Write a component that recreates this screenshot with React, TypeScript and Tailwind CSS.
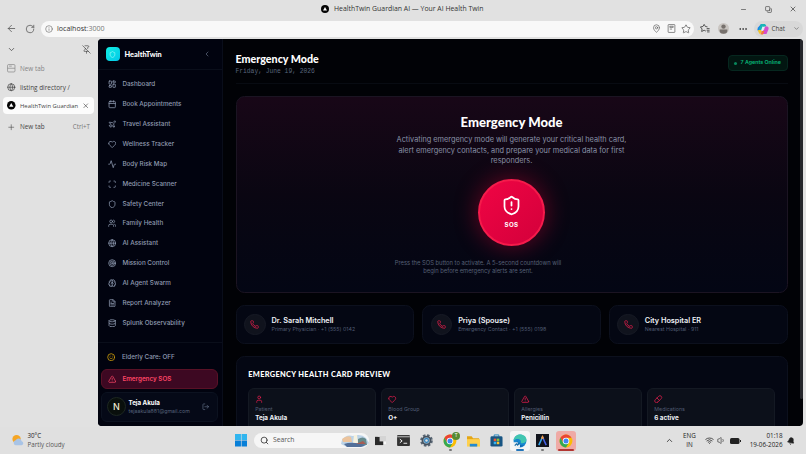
import type { ReactNode } from 'react';
import {
  Activity,
  ArrowLeft,
  Bell,
  Brain,
  Calendar,
  ChevronDown,
  ChevronLeft,
  ChevronUp,
  Copy,
  Database,
  Ellipsis,
  FileText,
  Globe,
  Heart,
  Info,
  LayoutDashboard,
  LogOut,
  MapPin,
  Minus,
  Phone,
  Pill,
  PinOff,
  Plane,
  Plus,
  RotateCw,
  Scan,
  Search,
  Shield,
  ShieldAlert,
  Smile,
  Star,
  Target,
  TriangleAlert,
  User,
  Users,
  Volume1,
  Wifi,
  X,
  type LucideIcon,
} from 'lucide-react';

const navItems: { label: string; icon: LucideIcon }[] = [
  { label: 'Dashboard', icon: LayoutDashboard },
  { label: 'Book Appointments', icon: Calendar },
  { label: 'Travel Assistant', icon: Plane },
  { label: 'Wellness Tracker', icon: Heart },
  { label: 'Body Risk Map', icon: Activity },
  { label: 'Medicine Scanner', icon: Scan },
  { label: 'Safety Center', icon: Shield },
  { label: 'Family Health', icon: Users },
  { label: 'AI Assistant', icon: Globe },
  { label: 'Mission Control', icon: Target },
  { label: 'AI Agent Swarm', icon: Brain },
  { label: 'Report Analyzer', icon: FileText },
  { label: 'Splunk Observability', icon: Database },
];

const contacts = [
  { name: 'Dr. Sarah Mitchell', detail: 'Primary Physician · +1 (555) 0142' },
  { name: 'Priya (Spouse)', detail: 'Emergency Contact · +1 (555) 0198' },
  { name: 'City Hospital ER', detail: 'Nearest Hospital · 911' },
];

const healthCard: { label: string; value: string; icon: LucideIcon }[] = [
  { label: 'Patient', value: 'Teja Akula', icon: User },
  { label: 'Blood Group', value: 'O+', icon: Heart },
  { label: 'Allergies', value: 'Penicillin', icon: TriangleAlert },
  { label: 'Medications', value: '6 active', icon: Pill },
];

const AppMark = ({ className }: { className: string }) => (
  <svg viewBox="0 0 16 16" className={className}>
    <circle cx="8" cy="8" r="8" fill="#050505" />
    <path d="M8 3.8 12 11H4z" fill="#fff" />
  </svg>
);

const Chrome = () => (
  <svg viewBox="0 0 24 24" className="size-[14px]">
    <circle cx="12" cy="12" r="11" fill="#fbbc05" />
    <path d="M2.5 6.5A11 11 0 0 1 21.5 6.5H12L7.2 14.8z" fill="#ea4335" />
    <path d="M2.5 6.5A11 11 0 0 0 12 23l4.8-8.2H7.2z" fill="#34a853" />
    <circle cx="12" cy="12" r="5.6" fill="#fff" />
    <circle cx="12" cy="12" r="4.3" fill="#4285f4" />
  </svg>
);

const TitleBar = () => (
  <div className="flex h-[18px] items-center">
    <div className="w-[321px]" />
    <AppMark className="size-[8px]" />
    <span className="ml-[5px] text-[6.9px] whitespace-nowrap text-[#333]">
      HealthTwin Guardian AI — Your AI Health Twin
    </span>
    <div className="mr-[9px] ml-auto flex items-center gap-[17.5px] text-[#333]">
      <Minus className="size-[7px]" />
      <Copy className="size-[7px] -scale-x-100 rotate-90" />
      <X className="size-[8px]" />
    </div>
  </div>
);

const Toolbar = () => (
  <div className="flex h-[21px] items-center text-[#555]">
    <ArrowLeft className="ml-[6px] size-[11px]" strokeWidth={1.7} />
    <RotateCw className="ml-[8px] size-[10px]" strokeWidth={1.8} />
    <div className="ml-[6px] flex h-[16px] w-[653px] items-center rounded-full bg-[#f8f8f8] pr-[3px] pl-[4px]">
      <Info className="size-[8px]" strokeWidth={1.6} />
      <span className="ml-[4px] text-[7.05px] text-[#333]">
        localhost<span className="text-[#777]">:3000</span>
      </span>
      <div className="ml-auto flex items-center gap-[5.5px]">
        <MapPin className="size-[9px]" strokeWidth={1.7} />
        <svg viewBox="0 0 16 16" className="size-[9px]" fill="none" stroke="currentColor" strokeWidth="1.2">
          <rect x="2" y="1" width="12" height="14" rx="1" />
          <path d="M5 4h6v2H5zM5 9h4" />
        </svg>
        <Star className="size-[10px]" strokeWidth={1.7} />
      </div>
    </div>
    <svg viewBox="0 0 24 24" className="ml-[6px] size-[10px]" fill="none" stroke="#333" strokeWidth="1.9" strokeLinejoin="round">
      <path d="m14 17-4-2-6 3 1-6-4-5 6-1 3-5 3 5 5 1M16 11h7M16 15h7M17 19h6" />
    </svg>
    <svg viewBox="0 0 20 20" className="ml-[8px] size-[11px]">
      <circle cx="10" cy="10" r="10" fill="#c9c5c1" />
      <circle cx="10" cy="6.5" r="4" fill="#77716d" />
      <path d="M3 12h14v2a7 5.5 0 0 1-14 0z" fill="#77716d" />
    </svg>
    <Ellipsis className="ml-[8.5px] size-[10px] text-[#333]" />
    <div className="ml-[6px] flex h-[16px] w-[49px] items-center rounded-full bg-[#d8d8d8] pr-[3px] pl-[3px]">
      <svg viewBox="0 0 24 24" className="size-[12px]">
        <path d="M8 2h8l-5 14H4Q-1 16 2 9z" fill="#1684e8" />
        <path d="M8 2h7q3 0 4 5h-5L9 17H3l3-10z" fill="#19b5b7" />
        <path d="M2 14h8l3-7-6 15Q4 22 3 18z" fill="#f4c52c" />
        <path d="M16 7h5q4 2 1 8l-3 7H8l3-8h3z" fill="#d44dce" />
        <path d="M10 16h5l-3 7H7z" fill="#f47839" />
        <path d="m11 7 4 1-3 8-4-1z" fill="#e9eef4" />
      </svg>
      <span className="ml-[3px] text-[6.3px] text-[#444]">Chat</span>
      <ChevronDown className="ml-auto size-[7px]" />
    </div>
  </div>
);

const TabPane = () => (
  <div className="flex w-[97.5px] shrink-0 flex-col text-[6.35px] text-[#444]">
    <div className="flex h-[20px] items-center justify-between pr-[7px] pl-[7px]">
      <ChevronDown className="size-[9px]" />
      <PinOff className="size-[9px]" strokeWidth={1.7} />
    </div>
    <div className="flex h-[19px] items-center gap-[4.5px] pl-[7px] text-[#858585]">
      <svg viewBox="0 0 16 16" className="size-[8.5px]" fill="none" stroke="currentColor" strokeWidth="1.3">
        <rect x="1" y="1" width="14" height="14" rx="2" />
        <path d="M1 8h14M4 4h5" />
      </svg>
      New tab
    </div>
    <div className="flex h-[19px] items-center gap-[4.5px] pl-[7px]">
      <Globe className="size-[8.5px]" />
      <span className="text-[6.4px]">listing directory /</span>
    </div>
    <div className="ml-[3px] flex h-[17px] w-[91px] items-center rounded-[4px] bg-[#fcfcfc] pl-[4px]">
      <AppMark className="size-[8.5px] shrink-0" />
      <span className="ml-[4.5px] w-[61px] pt-[1px] text-[5.9px] whitespace-nowrap">
        HealthTwin Guardian
      </span>
      <X className="ml-[1px] size-[7.5px] shrink-0" />
    </div>
    <div className="mt-[4px] flex h-[18px] items-center pr-[7.5px] pl-[7px]">
      <Plus className="mr-[4.5px] size-[8.5px]" strokeWidth={1.6} />
      New tab
      <span className="ml-auto text-[6.2px] text-[#777]">Ctrl+T</span>
    </div>
  </div>
);

const SideBar = () => (
  <aside className="flex w-[125.5px] shrink-0 flex-col border-r border-[#090d1a] bg-[#01030f]">
    <div className="flex h-[31px] shrink-0 items-center border-b border-[#0a0e1a] pr-[11px] pl-[8px]">
      <div className="flex size-[14.5px] items-center justify-center rounded-[4px] bg-linear-to-br from-[#12eee2] to-[#05c8e9]">
        <Shield className="size-[7px] text-[#b8ffff]" />
      </div>
      <span className="ml-[4.5px] pt-[1px] font-['Lato'] text-[7.4px] font-black text-white">
        HealthTwin
      </span>
      <ChevronLeft className="ml-auto size-[8px] text-[#667187]" />
    </div>
    <nav className="flex flex-col pt-[4.6px] pl-[10px]">
      {navItems.map(({ label, icon: Icon }) => (
        <div key={label} className="flex h-[19.88px] items-center gap-[6.5px] text-[#8f9ab0]">
          <Icon className="size-[8.4px]" strokeWidth={2.2} />
          <span className="pt-[1px] text-[6.3px] font-medium whitespace-nowrap">{label}</span>
        </div>
      ))}
    </nav>
    <div className="mt-auto flex h-[84px] shrink-0 flex-col border-t border-[#0a0e1a] pr-[4.5px] pl-[3.5px]">
      <div className="mt-[4px] flex h-[20px] items-center gap-[6.5px] pl-[6px]">
        <Smile className="size-[8.4px] text-[#d6a30b]" strokeWidth={2.2} />
        <span className="pt-[1px] text-[6.35px] font-medium text-[#8f9ab0]">
          Elderly Care: OFF
        </span>
      </div>
      <div className="mt-[2px] flex h-[20px] items-center gap-[6.5px] rounded-[6px] border border-[#591126] bg-[#3d0822] pl-[5.5px] text-[#fb4565]">
        <TriangleAlert className="size-[8.4px]" />
        <span className="pt-[1px] text-[6.3px] font-semibold">Emergency SOS</span>
      </div>
      <div className="mt-[2.5px] flex h-[30.5px] items-center rounded-[6px] border border-[#0c1220] bg-[#050917] pr-[7px] pl-[5px]">
        <div className="flex size-[19px] items-center justify-center rounded-full border border-[#1d2721] bg-[#090f0c] text-[9px] font-medium text-[#eee9cf]">
          N
        </div>
        <div className="ml-[2.5px] flex flex-col">
          <span className="text-[6.2px] leading-[8px] font-bold text-white">Teja Akula</span>
          <span className="text-[5.25px] leading-[8px] text-[#566279]">tejaakula881@gmail.com</span>
        </div>
        <LogOut className="ml-auto size-[7.5px] text-[#68758c]" />
      </div>
    </div>
  </aside>
);

const Hero = () => (
  <section className="flex h-[197px] shrink-0 flex-col items-center rounded-[8.4px] border border-[#1b1422] bg-linear-to-b from-[#180717] via-[#0a0612] to-[#030614]">
    <h2 className="mt-[16.5px] font-['Lato'] text-[13.1px] leading-[17px] font-black text-white">
      Emergency Mode
    </h2>
    <p className="mt-[4.8px] flex flex-col text-center text-[7.35px] leading-[10.6px] whitespace-nowrap text-[#8a93a8]">
      <span>Activating emergency mode will generate your critical health card,</span>
      <span>alert emergency contacts, and prepare your medical data for first</span>
      <span>responders.</span>
    </p>
    <button className="mt-[11.5px] flex size-[67px] shrink-0 flex-col items-center justify-center rounded-full border-2 border-[#f51b4b] bg-linear-to-br from-[#f00544] to-[#d3003b] text-white shadow-[0_0_24px_rgba(225,0,55,0.45)]">
      <ShieldAlert className="size-[21px]" />
      <span className="mt-[3.5px] text-[6.2px] leading-[9px] font-bold tracking-[0.4px]">SOS</span>
    </button>
    <p className="mt-[13px] mr-[67px] flex flex-col text-center text-[5.8px] leading-[8.7px] whitespace-nowrap text-[#556076]">
      <span>Press the SOS button to activate. A 5-second countdown will</span>
      <span>begin before emergency alerts are sent.</span>
    </p>
  </section>
);

const MainPanel = () => (
  <main className="flex min-w-0 flex-1 flex-col overflow-hidden bg-[#010206] pr-[12.5px] pl-[12.5px]">
    <header className="flex h-[45px] shrink-0 items-center justify-between border-b border-[#080b12]">
      <div className="flex flex-col pt-[6.5px]">
        <h1 className="font-['Lato'] text-[10.7px] leading-[14px] font-black text-white">
          Emergency Mode
        </h1>
        <p className="pt-[0.6px] font-['Liberation_Mono'] text-[6.3px] leading-[10px] text-[#59657c]">
          Friday, June 19, 2026
        </p>
      </div>
      <div className="mt-[4px] flex h-[15.5px] w-[60px] items-center justify-center gap-[3.5px] rounded-[4px] border border-[#06271f] bg-[#021611] text-[#08b779]">
        <span className="size-[3px] rounded-full bg-[#08875c]" />
        <span className="pt-[0.5px] text-[5.3px] font-semibold">7 Agents Online</span>
      </div>
    </header>
    <div className="h-[12px] shrink-0" />
    <Hero />
    <section className="mt-[12px] grid shrink-0 grid-cols-3 gap-[8px]">
      {contacts.map(({ name, detail }) => (
        <div
          key={name}
          className="flex h-[38.5px] items-center rounded-[8.4px] border border-[#0c101d] bg-[#040713] pl-[7.5px]"
        >
          <div className="flex size-[21.5px] items-center justify-center rounded-full border border-[#171a25] bg-[#10131d]">
            <Phone className="size-[9px] text-[#d51e49]" strokeWidth={2.2} />
          </div>
          <div className="ml-[6px] flex flex-col">
            <span className="text-[7.3px] leading-[9px] font-semibold text-[#eef1f6]">{name}</span>
            <span className="text-[5.3px] leading-[8px] text-[#505b72]">{detail}</span>
          </div>
        </div>
      ))}
    </section>
    <section className="mt-[12px] h-[120px] shrink-0 rounded-[8.4px] border border-[#0c101d] bg-[#040713] px-[11.7px]">
      <h3 className="mt-[12.5px] font-['Lato'] text-[7.4px] leading-[12px] font-black tracking-[0.34px] text-white">
        EMERGENCY HEALTH CARD PREVIEW
      </h3>
      <div className="mt-[6.5px] grid grid-cols-4 gap-[5.5px]">
        {healthCard.map(({ label, value, icon: Icon }) => (
          <div
            key={label}
            className="flex h-[46px] flex-col rounded-[6px] border border-[#141923] bg-[#0c101a] px-[6px] pt-[6px]"
          >
            <Icon className="size-[8.4px] text-[#df1d4c]" strokeWidth={2.2} />
            <span className="mt-[2px] text-[5.3px] leading-[8px] text-[#505b72]">{label}</span>
            <span className="mt-[1px] text-[6.3px] leading-[9px] font-bold text-[#eef1f6]">
              {value}
            </span>
          </div>
        ))}
      </div>
    </section>
  </main>
);

interface TaskIconProps {
  children: ReactNode;
  className?: string;
  bar?: string;
}

const TaskIcon = ({ children, className = '', bar }: TaskIconProps) => (
  <div className={`relative flex h-[20px] w-[20px] items-center justify-center rounded-[3px] ${className}`}>
    {children}
    {bar && <span className={`absolute bottom-0 h-[1.5px] rounded-full ${bar}`} />}
  </div>
);

const Weather = () => (
  <div className="flex w-[234.5px] shrink-0 items-center gap-[3.5px] pl-[11px]">
    <svg viewBox="0 0 14 14" className="size-[13px]">
      <circle cx="6" cy="5.5" r="4.5" fill="#f5a524" />
      <path d="M5 12a2.7 2.7 0 0 1 0-5.3 3.5 3.5 0 0 1 6.5 1 2.2 2.2 0 0 1 0 4.3z" fill="#a9c4e6" />
    </svg>
    <div className="flex flex-col text-[6.2px] leading-[8.4px] whitespace-nowrap">
      <span className="text-[#222]">30°C</span>
      <span className="text-[#555]">Partly cloudy</span>
    </div>
  </div>
);

const TaskBar = () => (
  <footer className="flex h-[27px] items-center bg-[#e0e0e0]">
    <Weather />
    <svg viewBox="0 0 12 12" className="size-[12.5px] shrink-0">
      <path d="M0 0h5.7v5.7H0zM6.3 0H12v5.7H6.3z" fill="#30b5ef" />
      <path d="M0 6.3h5.7V12H0zM6.3 6.3H12V12H6.3z" fill="#087fd8" />
    </svg>
    <div className="ml-[7px] flex h-[15.5px] w-[115px] shrink-0 items-center rounded-full bg-[#f6f6f6] pl-[5.5px]">
      <Search className="size-[9px] text-[#222]" />
      <span className="ml-[4.5px] text-[6.8px] text-[#555]">Search</span>
      <svg viewBox="0 0 28 14" className="ml-auto h-[14px] w-[28px]">
        <path d="M1 6Q5 0 12 2q8-3 13 2l3 5-6 4H6L0 10z" fill="#bcd3e7" />
        <path d="M1 5q5-4 9-2l1 5H2z" fill="#ecc49d" />
        <path d="M13 1h3l1 8h-5z" fill="#f6f2df" />
        <path d="M17 5q5-3 8 0l1 6h-9z" fill="#668b8c" />
        <path d="M3 10q8-3 22 1l-5 2H6z" fill="#526f99" />
        <path d="m15 10 7-3 3 3z" fill="#a55c54" />
      </svg>
    </div>
    <div className="ml-[1.5px] flex gap-[3.2px]">
      <TaskIcon>
        <svg viewBox="0 0 12 12" className="size-[11px]">
          <path d="M3 1h9v9H3z" fill="#f8f8f8" />
          <path d="M0 2h9v9H0z" fill="#292929" />
          <path d="M5 1h7v6H5z" fill="#d4d4d4" />
        </svg>
      </TaskIcon>
      <TaskIcon>
        <svg viewBox="0 0 14 12" className="h-[11px] w-[13px]">
          <rect width="14" height="12" rx="1" fill="#333" />
          <path d="M0 1h14v1.6H0z" fill="#999" />
          <path d="m3 4.5 2.5 2L3 8.5M7 9h4" stroke="#fff" fill="none" />
        </svg>
      </TaskIcon>
      <TaskIcon>
        <svg viewBox="0 0 24 24" className="size-[13px]">
          <circle cx="12" cy="12" r="9.7" fill="none" stroke="#5a6774" strokeWidth="4" strokeDasharray="4.6 3" />
          <circle cx="12" cy="12" r="7.5" fill="#8eaabd" stroke="#45515e" strokeWidth="3" />
          <circle cx="12" cy="12" r="3.5" fill="#e0e0e0" stroke="#247dbd" strokeWidth="2" />
        </svg>
      </TaskIcon>
      <TaskIcon bar="w-[3px] bg-[#777]">
        <Chrome />
        <span className="absolute top-[1px] right-0 flex size-[8px] items-center justify-center rounded-full bg-[#568a32] text-[5px] text-white">
          T
        </span>
      </TaskIcon>
      <TaskIcon>
        <svg viewBox="0 0 14 12" className="h-[12px] w-[13px]">
          <path d="M0 1h5l1.5 2H13v5H0z" fill="#e4a616" />
          <path d="M0 4h14v8H0z" fill="#ffd04d" />
          <path d="M3 9h8v3H3z" fill="#238ad1" />
        </svg>
      </TaskIcon>
      <TaskIcon>
        <svg viewBox="0 0 14 14" className="size-[13px]">
          <path d="M4.5 3V1h5v2" fill="none" stroke="#2085bd" />
          <rect x=".5" y="2.5" width="13" height="11" rx="1.5" fill="#185583" />
          <path d="M4 5h2.7v2.7H4z" fill="#f15a32" />
          <path d="M7.3 5H10v2.7H7.3z" fill="#83c43e" />
          <path d="M4 8.3h2.7V11H4z" fill="#35b4ef" />
          <path d="M7.3 8.3H10V11H7.3z" fill="#ffc22d" />
        </svg>
      </TaskIcon>
      <TaskIcon className="bg-[#f5f5f5]" bar="w-[8px] bg-[#2476bb]">
        <svg viewBox="0 0 24 24" className="size-[14px]">
          <circle cx="12" cy="12" r="11" fill="#1686cf" />
          <path d="M1 11C2 4 7 1 12 1c7 0 11 4 11 9 0 4-3 6-7 6-4 0-2-3-3-5-3-4-9-3-12 0z" fill="#42c6b0" />
          <path d="M8 12c-1 5 4 9 11 7-5 5-14 4-14-3z" fill="#125fa8" />
          <path d="M1 14h7v4h4v5H4l-3-4z" fill="#e8f0f4" />
          <path d="m3 20 3-3 2 2 3-4" stroke="#176ba5" strokeWidth="2" fill="none" />
        </svg>
      </TaskIcon>
      <TaskIcon bar="w-[3px] bg-[#777]">
        <svg viewBox="0 0 14 14" className="size-[13px]">
          <path d="M0 0h14v14H0z" fill="#11131b" />
          <path d="M3 12Q5 8 7 3" stroke="#39a9ef" strokeWidth="1.7" fill="none" />
          <path d="M7 3q2 5 4 9" stroke="#4662e7" strokeWidth="1.7" fill="none" />
          <path d="m6 5 1-2 1 2" stroke="#f19b46" strokeWidth="1.6" fill="none" />
        </svg>
      </TaskIcon>
      <TaskIcon className="bg-[#efaaa5]" bar="w-[16px] bg-[#b33632]">
        <Chrome />
      </TaskIcon>
    </div>
    <div className="mr-[11px] ml-auto flex items-center text-[6.3px] leading-[8.4px] text-[#222]">
      <ChevronUp className="size-[9px]" />
      <div className="ml-[8.5px] flex w-[14px] flex-col items-center">
        <span>ENG</span>
        <span>IN</span>
      </div>
      <Wifi className="ml-[8px] size-[9px]" />
      <Volume1 className="ml-[3px] size-[9px]" strokeWidth={1.6} />
      <svg viewBox="0 0 22 12" className="ml-[4px] h-[6px] w-[11px]">
        <rect width="19" height="12" rx="3" fill="#222" />
        <path d="M20 4h2v4h-2z" fill="#222" />
      </svg>
      <div className="ml-[9px] flex w-[33px] flex-col items-end text-[6.3px]">
        <span>01:18</span>
        <span className="whitespace-nowrap">19-06-2026</span>
      </div>
      <Bell className="ml-[4.5px] size-[8px] rotate-12 fill-[#222]" />
    </div>
  </footer>
);

const App = () => (
  <div className="flex h-[454px] w-[806px] flex-col overflow-hidden bg-[#e1e1e1] font-['Open_Sans',sans-serif]">
    <TitleBar />
    <Toolbar />
    <div className="flex h-[388px] shrink-0 pb-[1px]">
      <TabPane />
      <div className="flex w-[705.5px] overflow-hidden rounded-[4px] bg-[#010206] font-['Inter',sans-serif]">
        <SideBar />
        <MainPanel />
        <div className="w-[3px] shrink-0">
          <div className="h-[360px] rounded-b-full bg-[#24252a]" />
        </div>
      </div>
    </div>
    <TaskBar />
  </div>
);

export default App;
